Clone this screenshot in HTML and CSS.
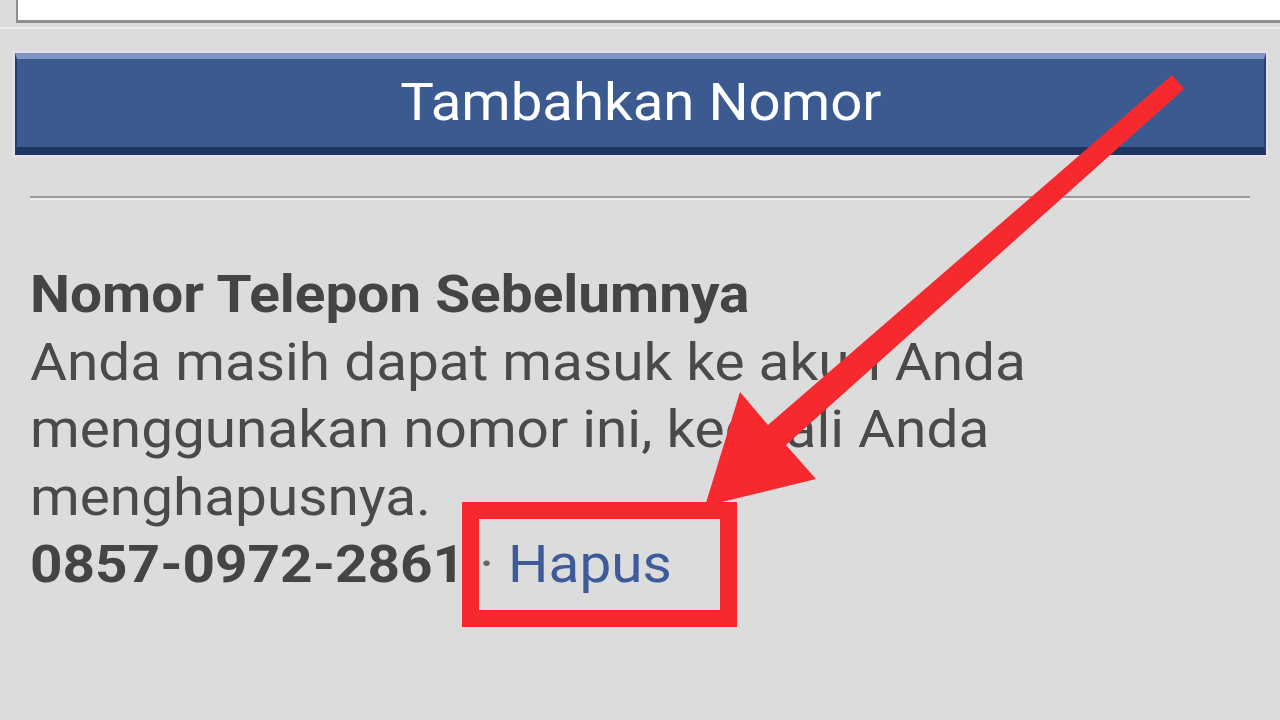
FILE: index.html
```html
<!DOCTYPE html>
<html>
<head>
<meta charset="utf-8">
<link rel="stylesheet" href="styles.css">
</head>
<body>
<div class="page">
  <div class="input-wrap"><div class="input"></div></div>
  <div class="btn-wrap">
    <div class="btn"><span class="btn-label">Tambahkan Nomor</span></div>
  </div>
  <div class="divider"></div>
  <div class="content">
    <div class="heading">Nomor Telepon Sebelumnya</div>
    <div class="desc">Anda masih dapat masuk ke akun Anda menggunakan nomor ini, kecuali Anda menghapusnya.</div>
    <div class="phone"><span class="num">0857-0972-2861</span><span class="dot"> · </span><span class="link">Hapus</span></div>
  </div>
</div>
<svg class="overlay" width="1280" height="720" viewBox="0 0 1280 720">
  <rect x="470.5" y="510.5" width="258" height="108" fill="none" stroke="#f3292e" stroke-width="17"/>
  <polygon fill="#f5292e" points="1172,75 1184,89 786,445 816,479 705,506 740,392 768,425"/>
</svg>
</body>
</html>
```
FILE: styles.css
```css
html, body {
  margin: 0;
  padding: 0;
}
body {
  width: 1280px;
  height: 720px;
  overflow: hidden;
  background: #dcdcdc;
  font-family: Roboto, "Noto Sans", sans-serif;
  position: relative;
}
.page {
  display: flex;
  flex-direction: column;
}
.input-wrap {
  padding: 0 0 4px 16px;
  border-bottom: 2px solid #ebebeb;
}
.input {
  height: 20px;
  background: #fff;
  border-left: 2px solid #8c8c8c;
  border-bottom: 3px solid #8c8c8c;
}
.btn-wrap {
  margin: 22px 12px 0 13px;
  border: 2px solid #e4def0;
}
.btn {
  height: 88px;
  background: #3b5a8f;
  border-top: 6px solid #7f96c4;
  border-bottom: 8px solid #1e3562;
  border-left: 2px solid #233c6a;
  border-right: 2px solid #2a4373;
  color: #fff;
  font-size: 51px;
  line-height: 88px;
  text-align: center;
}
.btn-label {
  display: inline-block;
  transform: scaleX(1.105);
}
.divider {
  margin: 39px 30px 0 30px;
  height: 2px;
  background: #9a9a9a;
  border-bottom: 2px solid #ececec;
}
.content {
  margin: 61px 0 0 30px;
  color: #474747;
  font-size: 51px;
  line-height: 67.5px;
  width: 910px;
  transform: scaleX(1.112);
  transform-origin: left top;
}
.heading {
  font-weight: bold;
  color: #444;
}
.desc {
  color: #4a4a4a;
}
.phone .num {
  font-weight: bold;
  color: #444;
}
.phone .dot {
  color: #666;
}
.phone .link {
  color: #3d5b99;
}
.overlay {
  position: absolute;
  left: 0;
  top: 0;
}
```
